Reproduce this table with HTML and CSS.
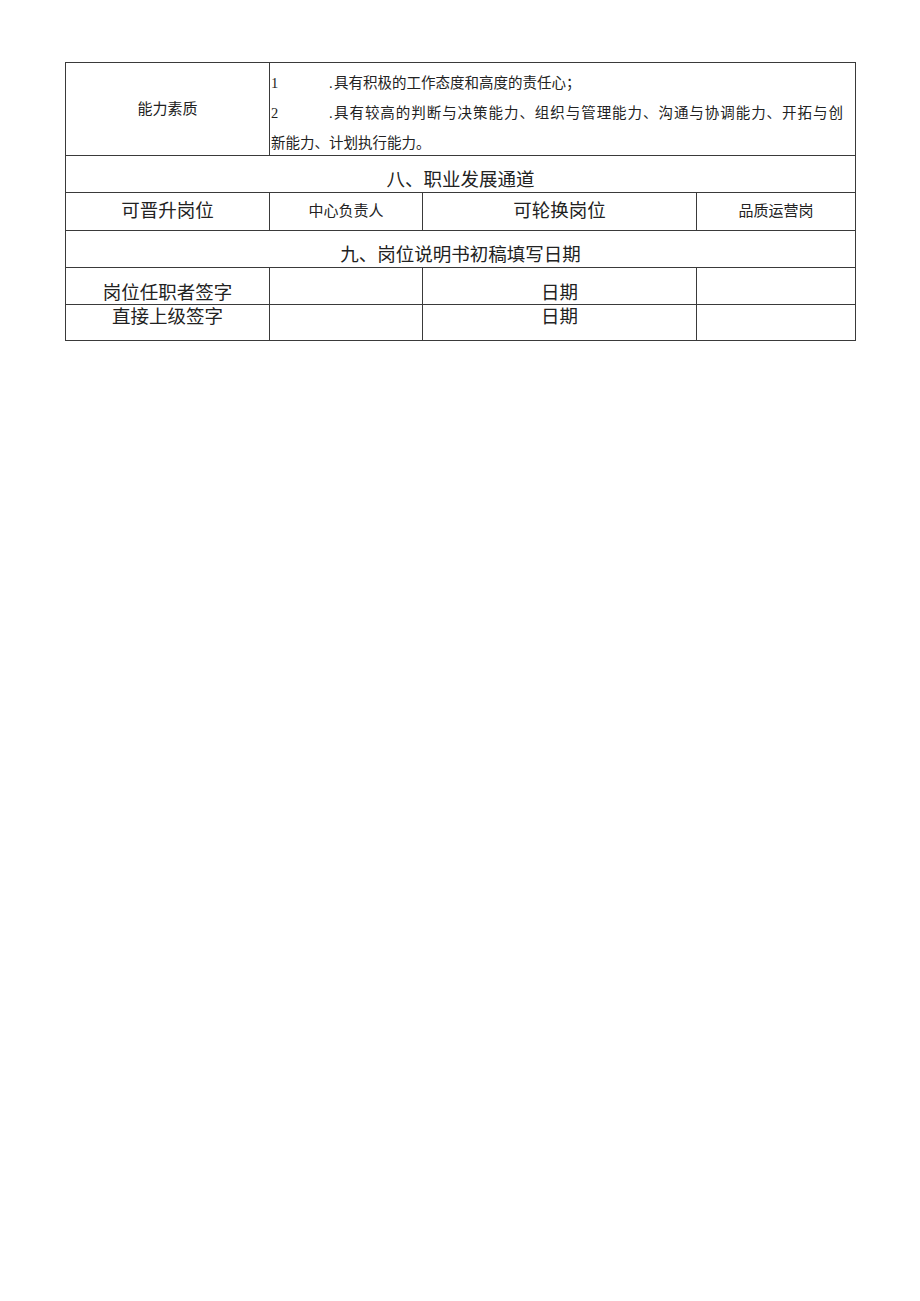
FILE: index.html
```html
<!DOCTYPE html>
<html lang="zh-CN">
<head>
<meta charset="utf-8">
<title>岗位说明书</title>
<link rel="stylesheet" href="styles.css">
</head>
<body>
<div class="page">
  <table class="jd">
    <colgroup>
      <col class="c1"><col class="c2"><col class="c3"><col class="c4">
    </colgroup>
    <tr class="r-ability">
      <td class="small mid">能力素质</td>
      <td colspan="3" class="desc">
        <div class="item"><span class="num">1</span><span class="dot">.</span>具有积极的工作态度和高度的责任心；</div>
        <div class="item"><span class="num">2</span><span class="dot">.</span><span class="spread">具有较高的判断与决策能力、组织与管理能力、沟通与协调能力、开拓与创</span></div>
        <div class="item last">新能力、计划执行能力。</div>
      </td>
    </tr>
    <tr class="r-head">
      <td colspan="4" class="big head">八、职业发展通道</td>
    </tr>
    <tr class="r-path">
      <td class="big mid">可晋升岗位</td>
      <td class="small mid">中心负责人</td>
      <td class="big mid">可轮换岗位</td>
      <td class="small mid">品质运营岗</td>
    </tr>
    <tr class="r-head">
      <td colspan="4" class="big head">九、岗位说明书初稿填写日期</td>
    </tr>
    <tr class="r-sign1">
      <td class="big low">岗位任职者签字</td>
      <td></td>
      <td class="big low">日期</td>
      <td></td>
    </tr>
    <tr class="r-sign2">
      <td class="big high">直接上级签字</td>
      <td></td>
      <td class="big high">日期</td>
      <td></td>
    </tr>
  </table>
</div>
</body>
</html>
```

FILE: styles.css
```css
html, body {
  margin: 0;
  padding: 0;
  background: #ffffff;
}

.page {
  width: 920px;
  min-height: 1301px;
  padding: 62px 0 0 65px;
  box-sizing: border-box;
  font-family: "Liberation Serif", "Noto Sans CJK SC", serif;
  color: #222222;
}

.jd {
  border-collapse: collapse;
  table-layout: fixed;
  width: 790px;
}

.c1 { width: 204px; }
.c2 { width: 153px; }
.c3 { width: 274px; }
.c4 { width: 159px; }

.jd td {
  border: 1px solid #3a3a3a;
  padding: 0;
  text-align: center;
  line-height: 1;
}

.r-ability td { height: 86px; }
.r-head td { height: 33px; }
.r-path td { height: 37px; }
.r-sign1 td { height: 34px; }
.r-sign2 td { height: 32px; }

.small {
  font-size: 15px;
}

.big {
  font-size: 18.5px;
}

.mid {
  vertical-align: middle;
}

.head {
  vertical-align: bottom;
  padding-bottom: 3px !important;
}

.low {
  vertical-align: bottom;
  padding-bottom: 2px !important;
}

.high {
  vertical-align: top;
  padding-top: 3px !important;
}

.desc {
  vertical-align: top;
  text-align: left !important;
  padding: 5px 2px 0 1px !important;
}

.item {
  font-size: 14.5px;
  line-height: 30px;
  white-space: nowrap;
}

.item.last {
  line-height: 24px;
  padding-top: 3px;
}

.num {
  display: inline-block;
  width: 58px;
}

.dot {
  display: inline-block;
  width: 5px;
}

.spread {
  letter-spacing: 0.95px;
}
```
